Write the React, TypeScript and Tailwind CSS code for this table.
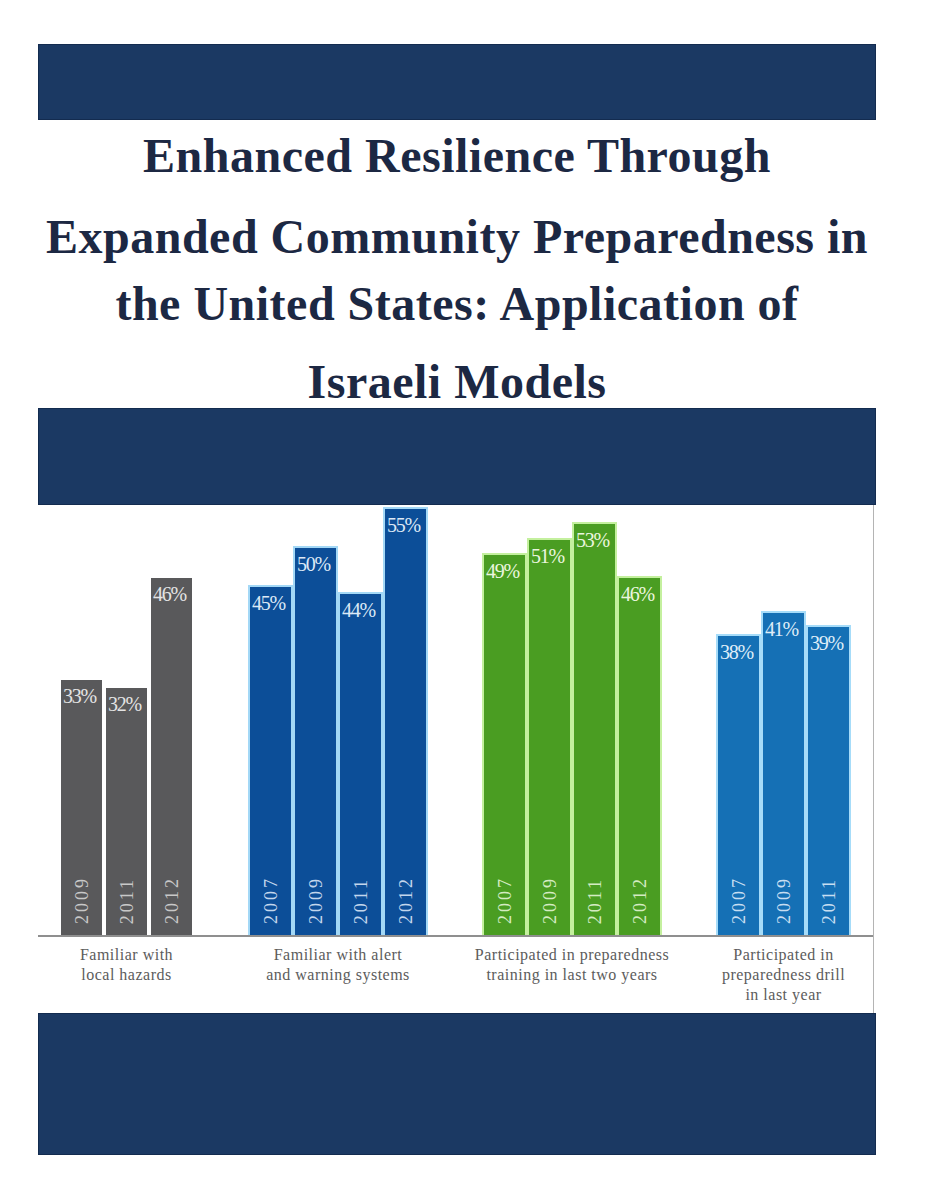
type Bar = { year: string; pct: string; h: number };

type Group = {
  label: string[];
  width: string;
  bar: string;
  pct: string;
  year: string;
  bars: Bar[];
};

const groups: Group[] = [
  {
    label: ["Familiar with", "local hazards"],
    width: "w-[135px]",
    bar: "bg-[#59595b] border-white",
    pct: "text-[#e4e4e4]",
    year: "text-[#c8c8c8]",
    bars: [
      { year: "2009", pct: "33%", h: 257 },
      { year: "2011", pct: "32%", h: 249 },
      { year: "2012", pct: "46%", h: 359 },
    ],
  },
  {
    label: ["Familiar with alert", "and warning systems"],
    width: "w-[180px]",
    bar: "bg-[#0c4e98] border-[#a3d8f6]",
    pct: "text-[#dde9f6]",
    year: "text-[#c3d6ec]",
    bars: [
      { year: "2007", pct: "45%", h: 350 },
      { year: "2009", pct: "50%", h: 389 },
      { year: "2011", pct: "44%", h: 343 },
      { year: "2012", pct: "55%", h: 428 },
    ],
  },
  {
    label: ["Participated in preparedness", "training in last two years"],
    width: "w-[180px]",
    bar: "bg-[#4a9d22] border-[#c4f09e]",
    pct: "text-[#ebf6df]",
    year: "text-[#d4ebc2]",
    bars: [
      { year: "2007", pct: "49%", h: 382 },
      { year: "2009", pct: "51%", h: 397 },
      { year: "2011", pct: "53%", h: 413 },
      { year: "2012", pct: "46%", h: 359 },
    ],
  },
  {
    label: ["Participated in", "preparedness drill", "in last year"],
    width: "w-[135px]",
    bar: "bg-[#1570b5] border-[#a6dcf9]",
    pct: "text-[#dfedf8]",
    year: "text-[#c7def1]",
    bars: [
      { year: "2007", pct: "38%", h: 301 },
      { year: "2009", pct: "41%", h: 324 },
      { year: "2011", pct: "39%", h: 310 },
    ],
  },
];

function Band({ height }: { height: string }) {
  return <div className={`${height} border border-[#132b4f] bg-[#1b3963]`} />;
}

export default function App() {
  return (
    <div className="min-h-[1200px] bg-white pt-[44px] font-['Liberation_Serif','Times_New_Roman',serif]">
      <div className="ml-[38px] w-[838px]">
        <Band height="h-[76px]" />

        {/* title, line breaks as on the cover */}
        <div className="h-[288px] text-center text-[48px] font-bold leading-none tracking-[0.5px] text-[#1c2843]">
          <p className="pt-[12px]">Enhanced Resilience Through</p>
          <p className="mt-[33px]">Expanded Community Preparedness in</p>
          <p className="mt-[19px]">the United States: Application of</p>
          <p className="mt-[30px]">Israeli Models</p>
        </div>

        <Band height="h-[97px]" />

        {/* chart */}
        <div className="h-[508px] w-[836px] border-r border-[#b4b4b4]">
          <div className="flex h-[430px] items-end gap-[54px] pl-[21px]">
            {groups.map((g) => (
              <div key={g.label.join(" ")} className={`flex items-end ${g.width}`}>
                {g.bars.map((b) => (
                  <div
                    key={b.year}
                    className={`flex w-[45px] flex-col items-start justify-between border-2 border-b-0 ${g.bar}`}
                    style={{ height: b.h }}
                  >
                    <span className={`pl-[2px] pt-[6px] text-[20px] leading-none tracking-[-1.2px] whitespace-nowrap ${g.pct}`}>
                      {b.pct}
                    </span>
                    <div className="mb-[11px] self-center">
                      <span className={`block rotate-180 text-[18px] leading-none tracking-[3px] [writing-mode:vertical-rl] ${g.year}`}>
                        {b.year}
                      </span>
                    </div>
                  </div>
                ))}
              </div>
            ))}
          </div>
          <div className="h-[2px] bg-[#8f8f8f]" />
          <div className="flex gap-[54px] pl-[21px] pt-[8px]">
            {groups.map((g) => (
              <div
                key={g.label.join(" ")}
                className={`flex flex-col items-center text-[16px] leading-[20px] tracking-[0.5px] whitespace-nowrap text-[#5c5c5c] ${g.width}`}
              >
                {g.label.map((line) => (
                  <span key={line}>{line}</span>
                ))}
              </div>
            ))}
          </div>
        </div>

        <Band height="h-[142px]" />
      </div>
    </div>
  );
}
